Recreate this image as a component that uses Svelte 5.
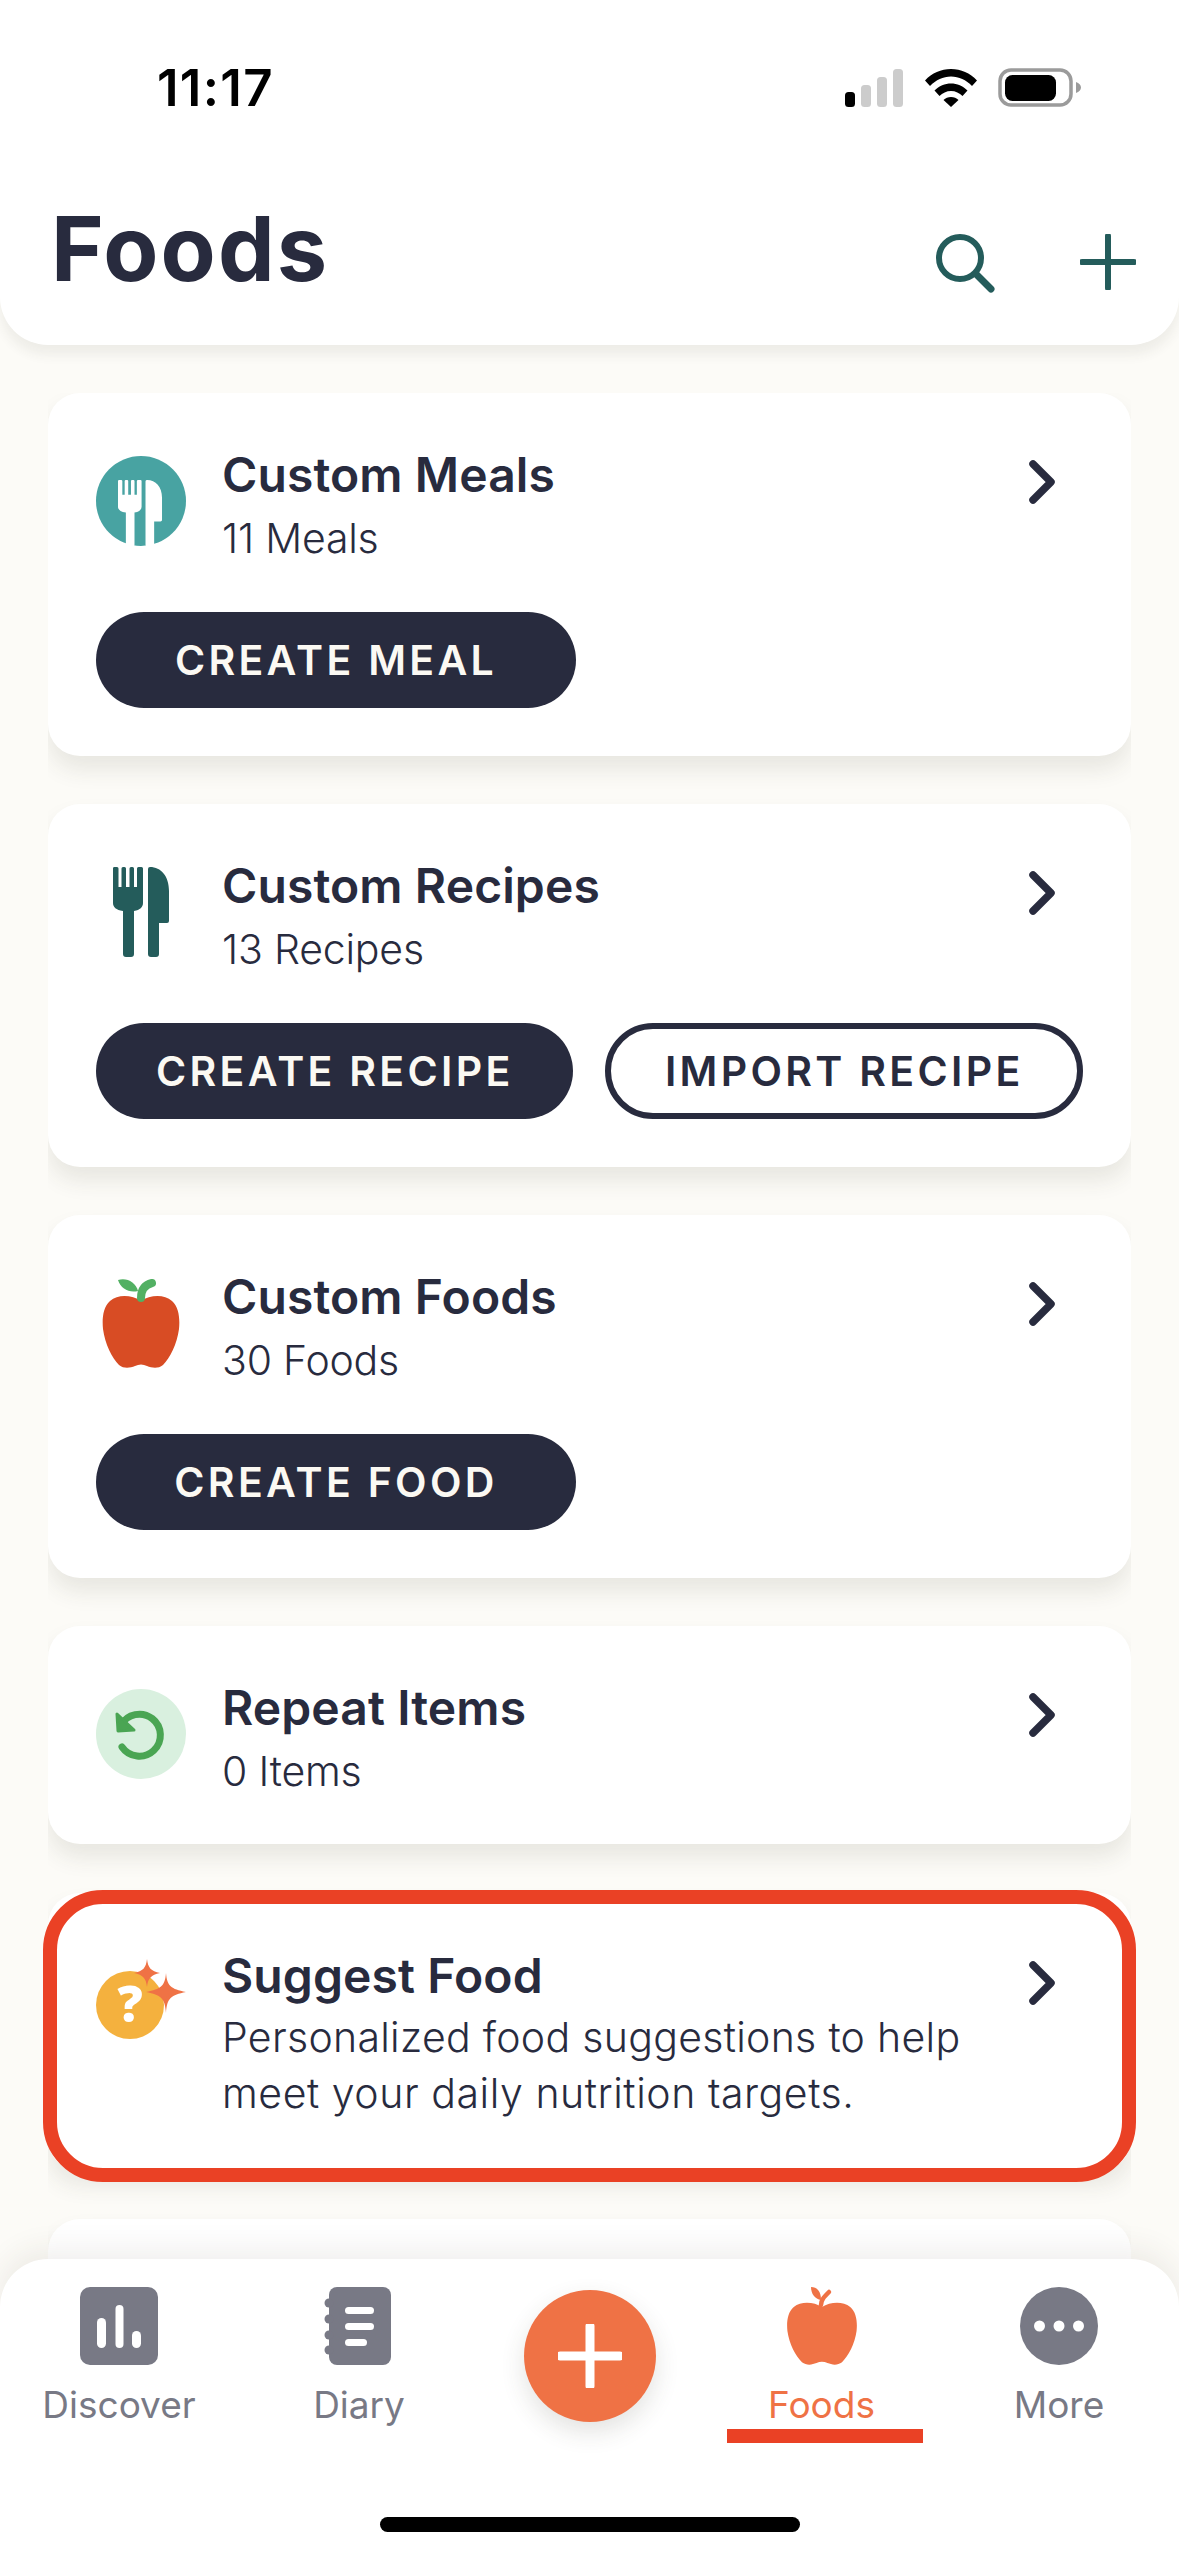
<script>
  const tabs = [
    { key: 'discover', label: 'Discover' },
    { key: 'diary', label: 'Diary' },
    { key: 'add', label: '' },
    { key: 'foods', label: 'Foods', active: true },
    { key: 'more', label: 'More' }
  ];
</script>

{#snippet chevron()}
  <svg class="chev" width="30" height="44" viewBox="0 0 30 44"><path d="M5 4 L23 22 L5 40" fill="none" stroke="#282b3e" stroke-width="7.5" stroke-linecap="round" stroke-linejoin="round"/></svg>
{/snippet}

{#snippet cutlery(c)}
  <path fill={c} d="M1 0h3a1.500 1.500 0 0 1 1.500 1.500V20h3V1.500A1.500 1.500 0 0 1 10 0h1.500A1.500 1.500 0 0 1 13 1.500V20h3.500V1.500A1.500 1.500 0 0 1 18 0h1.500A1.500 1.500 0 0 1 21 1.500V20h3V1.500A1.500 1.500 0 0 1 25.500 0h3A1.500 1.500 0 0 1 30 1.500V36c0 4-3 7-9 8v43a3 3 0 0 1-3 3h-5a3 3 0 0 1-3-3V44C3 43 0 40 0 36V1.500A1.500 1.500 0 0 1 1 0Z"/>
  <path fill={c} d="M37 0c11 0 19 9 19 24v30a2 2 0 0 1-2 2h-8v31a3 3 0 0 1-3 3h-5a3 3 0 0 1-3-3V2a2 2 0 0 1 2-2Z"/>
{/snippet}

{#snippet appleBody(c)}
  <path fill={c} d="M39 23C30 17 16 16 8 23 1 29 0 41 1 51c2 15 9 29 16 36 5 4 11 3 16 1 4-2 8-2 12 0 5 2 11 3 16-1 7-7 14-21 16-36 1-10 0-22-7-28-8-7-22-6-31 0Z"/>
{/snippet}

<div class="screen">
  <header class="top">
    <div class="status">
      <span class="time">11:17</span>
      <div class="sys">
        <svg width="60" height="38" viewBox="0 0 60 38">
          <rect x="0" y="23" width="10" height="15" rx="3.500" fill="#000"/>
          <rect x="16" y="16" width="10" height="22" rx="3.500" fill="#ccc"/>
          <rect x="32" y="8" width="10" height="30" rx="3.500" fill="#ccc"/>
          <rect x="48" y="0" width="10" height="38" rx="3.500" fill="#ccc"/>
        </svg>
        <svg width="52" height="38" viewBox="0 0 52 38">
          <path d="M0 11.500C7 4 16 0 26 0s19 4 26 11.500l-5 5.500C41 11 34 7.500 26 7.500S11 11 5 17Z" fill="#000"/>
          <path d="M9.500 21.500C14 17 20 14.500 26 14.500s12 2.500 16.500 7l-5 5.500c-3-3-7-5-11.500-5s-8.500 2-11.500 5Z" fill="#000"/>
          <path d="M18.500 31c2-2 4.500-3 7.500-3s5.500 1 7.500 3L26 38Z" fill="#000"/>
        </svg>
        <svg width="84" height="40" viewBox="0 0 84 40">
          <rect x="2" y="2" width="71" height="35" rx="11" fill="none" stroke="#9b9b9b" stroke-width="3.500"/>
          <rect x="7" y="7" width="51" height="26" rx="7.500" fill="#000"/>
          <path d="M78 14c3 1 5 3 5 5.500s-2 4.500-5 5.500Z" fill="#9b9b9b"/>
        </svg>
      </div>
    </div>
    <div class="bar">
      <h1>Foods</h1>
      <div class="actions">
        <svg width="64" height="64" viewBox="0 0 64 64"><circle cx="24" cy="24" r="21" fill="none" stroke="#245c5b" stroke-width="6"/><path d="M40 40 L55 55" stroke="#245c5b" stroke-width="7" stroke-linecap="round"/></svg>
        <svg width="56" height="56" viewBox="0 0 56 56"><path d="M28 2V54M2 28H54" stroke="#245c5b" stroke-width="6" stroke-linecap="round"/></svg>
      </div>
    </div>
  </header>

  <main class="content">
    <div class="list">
      <section class="card tall">
        <div class="row">
          <svg class="icon" width="90" height="90" viewBox="0 0 90 90">
            <circle cx="45" cy="45" r="45" fill="#48a3a2"/>
            <g transform="translate(22 24) scale(.786 .74)">
              {@render cutlery('#fff')}
            </g>
          </svg>
          <div class="text">
            <h2>Custom Meals</h2>
            <p>11 Meals</p>
          </div>
          {@render chevron()}
        </div>
        <div class="btns"><button class="solid solo">CREATE MEAL</button></div>
      </section>

      <section class="card tall">
        <div class="row">
          <svg class="icon" width="90" height="90" viewBox="0 0 90 90"><g transform="translate(17 0)">{@render cutlery('#245c5b')}</g></svg>
          <div class="text">
            <h2>Custom Recipes</h2>
            <p>13 Recipes</p>
          </div>
          {@render chevron()}
        </div>
        <div class="btns">
          <button class="solid">CREATE RECIPE</button>
          <button class="line">IMPORT RECIPE</button>
        </div>
      </section>

      <section class="card tall">
        <div class="row">
          <svg class="icon" width="90" height="90" viewBox="-6 0 90 90">
            {@render appleBody('#d84c24')}
            <path d="M39 20c0-8 3-13 11-15" fill="none" stroke="#52b063" stroke-width="8" stroke-linecap="round"/>
            <path d="M16 2c8-3 18 2 20 11-9 2-17-2-20-11Z" fill="#52b063"/>
          </svg>
          <div class="text">
            <h2>Custom Foods</h2>
            <p>30 Foods</p>
          </div>
          {@render chevron()}
        </div>
        <div class="btns"><button class="solid solo">CREATE FOOD</button></div>
      </section>

      <section class="card short">
        <div class="row">
          <svg class="icon" width="90" height="90" viewBox="0 0 90 90">
            <circle cx="45" cy="45" r="45" fill="#d9f0df"/>
            <path d="M26 58a21 21 0 1 0-1-22" fill="none" stroke="#4aa553" stroke-width="7" stroke-linecap="round"/>
            <path d="M21 25l1 17 16-1Z" fill="#4aa553" stroke="#4aa553" stroke-width="3" stroke-linejoin="round"/>
          </svg>
          <div class="text">
            <h2>Repeat Items</h2>
            <p>0 Items</p>
          </div>
          {@render chevron()}
        </div>
      </section>

      <section class="card suggest">
        <div class="row">
          <svg class="icon" width="90" height="90" viewBox="0 0 90 90">
            <circle cx="34" cy="46" r="34" fill="#f4b13e"/>
            <text x="34" y="63" text-anchor="middle" class="q">?</text>
            <path d="M51 0C52 9 55 12 64 14 55 16 52 19 51 28 50 19 47 16 38 14 47 12 50 9 51 0Z" fill="#ef7245"/>
            <path d="M70 14C71 27 75 30 90 33 75 36 71 39 70 54 69 39 65 36 50 33 65 30 69 27 70 14Z" fill="#ef7245"/>
          </svg>
          <div class="text">
            <h2>Suggest Food</h2>
            <p class="wide">Personalized food suggestions to help<br><span class="l2">meet your daily nutrition targets.</span></p>
          </div>
          {@render chevron()}
        </div>
      </section>

      <section class="card peek"></section>
    </div>
    <div class="ring"></div>
  </main>

  <nav class="tabs">
    {#each tabs as t}
      <div class="tab" class:on={t.active}>
        {#if t.key === 'discover'}
          <svg width="78" height="78" viewBox="0 0 78 78">
            <rect width="78" height="78" rx="10" fill="#787985"/>
            <rect x="17" y="31" width="9" height="30" rx="4.500" fill="#fff"/>
            <rect x="35.500" y="18" width="8" height="43" rx="4" fill="#fff"/>
            <rect x="52" y="44" width="9" height="17" rx="4.500" fill="#fff"/>
          </svg>
        {:else if t.key === 'diary'}
          <svg width="78" height="78" viewBox="0 0 78 78">
            <rect x="9" y="0" width="62" height="78" rx="8" fill="#787985"/>
            <circle cx="9" cy="16" r="4.500" fill="#787985"/><circle cx="9" cy="32" r="4.500" fill="#787985"/><circle cx="9" cy="48" r="4.500" fill="#787985"/><circle cx="9" cy="63" r="4.500" fill="#787985"/>
            <rect x="25" y="20" width="29" height="7" rx="3.500" fill="#fff"/>
            <rect x="25" y="36" width="29" height="7" rx="3.500" fill="#fff"/>
            <rect x="25" y="52" width="22" height="7" rx="3.500" fill="#fff"/>
          </svg>
        {:else if t.key === 'add'}
          <button class="fab" aria-label="Add">
            <svg width="64" height="64" viewBox="0 0 64 64"><path d="M32 2V62M2 32H62" stroke="#fff" stroke-width="9" stroke-linecap="round"/></svg>
          </button>
        {:else if t.key === 'foods'}
          <svg width="78" height="78" viewBox="0 0 78 78">
            <g transform="translate(3.500 0) scale(.91 .865)">{@render appleBody('#ef7245')}</g>
            <path d="M38 18c0-5 3-8 8-13" fill="none" stroke="#ef7245" stroke-width="4.500" stroke-linecap="round"/>
            <path d="M28 0c6 0 10 4 10 13-6-1-10-6-10-13Z" fill="#ef7245"/>
          </svg>
        {:else}
          <svg width="78" height="78" viewBox="0 0 78 78">
            <circle cx="39" cy="39" r="39" fill="#787985"/>
            <circle cx="19.500" cy="39" r="5.500" fill="#fff"/><circle cx="39" cy="39" r="5.500" fill="#fff"/><circle cx="58.500" cy="39" r="5.500" fill="#fff"/>
          </svg>
        {/if}
        {#if t.label}<span>{t.label}</span>{/if}
        {#if t.active}<i class="underline"></i>{/if}
      </div>
    {/each}
    <div class="home"></div>
  </nav>
</div>

<style>
  :global(body) { margin: 0; background: #fcfbf7; }
  .screen {
    position: relative;
    width: 1179px;
    height: 2556px;
    overflow: hidden;
    background: #fcfbf7;
    font-family: Inter, "Liberation Sans", sans-serif;
    color: #282b3e;
  }
  .top {
    height: 345px;
    box-sizing: border-box;
    background: #fff;
    border-radius: 0 0 48px 48px;
    box-shadow: 0 10px 12px rgba(60, 55, 40, 0.07);
  }
  .status {
    display: flex;
    justify-content: space-between;
    align-items: flex-start;
    padding: 68px 98px 0 157px;
    height: 120px;
    box-sizing: border-box;
  }
  .time { font-size: 51px; font-weight: 600; line-height: 40px; letter-spacing: 1.300px; color: #000; }
  .sys { display: flex; align-items: flex-start; gap: 22px; }
  .sys svg { display: block; }
  .sys svg:first-child { margin-top: 1px; margin-right: -2px; }
  .sys svg:nth-child(2) { margin-top: 1px; }
  .sys svg:last-child { margin-left: -1px; margin-right: -1px; }
  .bar {
    display: flex;
    justify-content: space-between;
    align-items: flex-start;
    padding: 84px 43px 0 51px;
  }
  h1 { margin: 0; font-size: 90px; font-weight: 700; line-height: 90px; letter-spacing: 2.100px; }
  .actions { display: flex; gap: 80px; padding-top: 30px; }
  .actions svg { display: block; }
  .content { position: relative; padding: 48px 48px 0; }
  .list {
    display: flex;
    flex-direction: column;
    gap: 48px;
    overflow: clip;
    padding-bottom: 60px;
  }
  .card {
    box-sizing: border-box;
    flex: none;
    background: #fff;
    border-radius: 32px;
    padding: 63px 48px 0;
    box-shadow: 0 14px 22px rgba(60, 55, 40, 0.1);
  }
  .tall { height: 363px; }
  .short { height: 218px; }
  .suggest { height: 278px; margin-top: 1px; padding-top: 64px; }
  .suggest .icon { margin-top: 2px; }
  .suggest .text { margin-top: -5px; }
  .peek { height: 120px; }
  .row { display: flex; align-items: flex-start; }
  .icon { flex: none; display: block; margin-right: 36px; }
  .text { flex: 1; min-width: 0; margin-top: -5px; }
  h2 { margin: 0; font-size: 48px; font-weight: 600; line-height: 48px; letter-spacing: 0.100px; }
  p { margin: 11px 0 0; font-size: 41px; font-weight: 300; line-height: 56px; letter-spacing: -0.200px; }
  .wide { margin-top: 9px; letter-spacing: 0.300px; }
  .l2 { letter-spacing: 0.550px; }
  .chev { flex: none; margin: 4px 25px 0 0; display: block; }
  .btns { display: flex; gap: 32px; margin-top: 46px; }
  button {
    font-family: inherit;
    box-sizing: border-box;
    width: 479px;
    height: 96px;
    border-radius: 48px;
    font-size: 41px;
    font-weight: 600;
    letter-spacing: 3.300px;
    padding: 0;
  }
  .solo { width: 480px; }
  .solid { background: #282b3e; color: #fbf9f3; border: 0; }
  .line { background: #fff; color: #282b3e; border: 6px solid #282b3e; }
  .ring {
    position: absolute;
    left: 43px;
    right: 43px;
    top: 1545px;
    height: 292px;
    box-sizing: border-box;
    border: 14px solid #ea4125;
    border-radius: 60px;
  }
  .tabs {
    position: absolute;
    left: 0;
    right: 0;
    bottom: 0;
    height: 297px;
    box-sizing: border-box;
    background: #fff;
    border-radius: 48px 48px 0 0;
    box-shadow: 0 -10px 30px rgba(60, 55, 40, 0.08);
    display: grid;
    grid-template-columns: 238px 242px 220px 243px 232px;
    padding-top: 28px;
  }
  .tab {
    position: relative;
    display: flex;
    flex-direction: column;
    align-items: center;
    color: #787985;
  }
  .tab > svg { display: block; }
  .tab span { font-size: 37px; line-height: 44px; margin-top: 18px; }
  .tab.on { color: #ef7245; }
  .fab {
    width: 132px;
    height: 132px;
    margin-top: 3px;
    border: 0;
    border-radius: 50%;
    background: #ef7245;
    display: flex;
    align-items: center;
    justify-content: center;
    box-shadow: 0 10px 24px rgba(60, 55, 40, 0.14);
  }
  .underline {
    position: absolute;
    left: 27px;
    top: 142px;
    width: 196px;
    height: 14px;
    background: #ea4125;
  }
  .home {
    position: absolute;
    left: 380px;
    top: 258px;
    width: 420px;
    height: 15px;
    border-radius: 8px;
    background: #000;
  }
  .q { font-family: "Open Sans", Inter, sans-serif; font-size: 50px; font-weight: 800; fill: #fff; }
</style>
